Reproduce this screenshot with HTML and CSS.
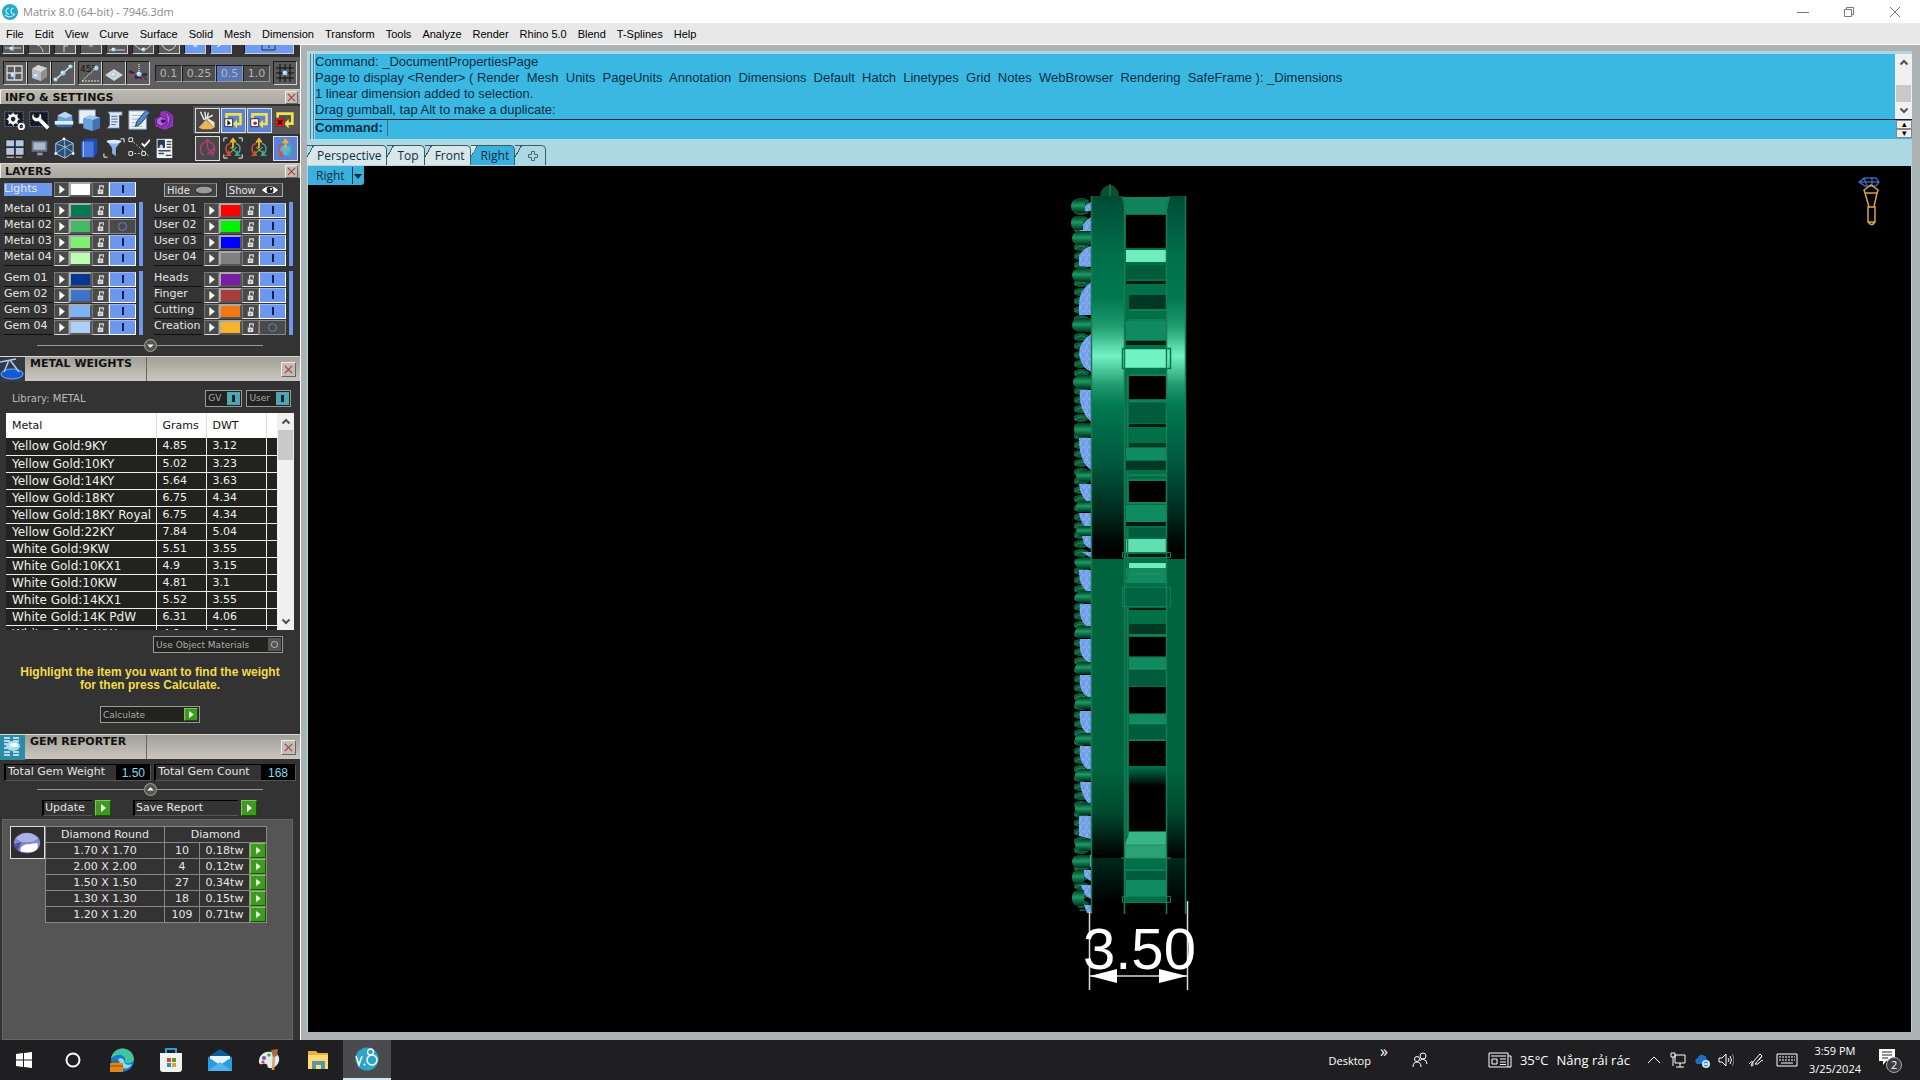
FILE: index.html
```html
<!DOCTYPE html>
<html lang="en">
<head>
  <meta charset="UTF-8" />
  <meta name="viewport" content="width=device-width, initial-scale=1.0" />
  <title>Matrix 8.0 (64-bit) - 7946.3dm</title>
  <link rel="stylesheet" href="styles.css">
</head>
<body>
  <!-- shared icons -->
  <svg class="defs" width="0" height="0">
    <symbol id="i-lock" viewBox="0 0 10 12"><path d="M2 6h6v5H2z" fill="#ddd"/><path d="M4 6V2h4v3" fill="none" stroke="#ddd" stroke-width="1.3"/><path d="M4 8.500h2" stroke="#555"/></symbol>
    <symbol id="i-play" viewBox="0 0 10 10"><path d="M3 1l5 4-5 4z" fill="#f4fff0"/></symbol>
    <symbol id="i-x" viewBox="0 0 10 10"><path d="M1 1l8 8M9 1l-8 8" stroke="#a33a3a" stroke-width="1.2"/></symbol>
    <symbol id="i-up" viewBox="0 0 10 10"><path d="M1.500 7L5 3.500 8.500 7" fill="none" stroke="#505050" stroke-width="2"/></symbol>
    <symbol id="i-down" viewBox="0 0 10 10"><path d="M1.500 3L5 6.500 8.500 3" fill="none" stroke="#505050" stroke-width="2"/></symbol>
    <symbol id="i-dot" viewBox="0 0 6 6"><circle cx="3" cy="3" r="2.500" fill="#9fd4f2"/><circle cx="2.300" cy="2.300" r="1" fill="#fff"/></symbol>
    <symbol id="i-rot" viewBox="0 0 24 24"><path d="M12 3v9M9 6l3-4 3 4" fill="none" stroke="#f0b429" stroke-width="2"/><path d="M9 7C3 8 3 16 8 19M7 15l2 5-5 0" fill="none" stroke="#d8503a" stroke-width="1.600"/><path d="M15 7c6 1 6 9 1 12M17 15l-2 5 5 0" fill="none" stroke="#3fa9a0" stroke-width="1.600"/><path d="M9 11l7 6M16 11l-7 6" stroke="#79b86a" stroke-width="1.200"/></symbol>
    <symbol id="i-loop" viewBox="0 0 24 24"><path d="M4 10V5h16v11h-6" fill="none" stroke="#f3e14c" stroke-width="3"/><path d="M16 11l-5 5 5 5z" fill="#f3e14c"/><path d="M2 10h9v9H2z" fill="#fff" stroke="#222"/></symbol>
  </svg>

  <header class="titlebar">
    <svg class="app-icon" viewBox="0 0 16 16"><circle cx="8" cy="8" r="8" fill="#25a9c4"/><path d="M7 4a3 3 0 1 0 0 6M12 4a3 3 0 1 0 0 6M3 11c3 3 8 2 10-1" fill="none" stroke="#b5edf5" stroke-width="1.200"/></svg>
    <span>Matrix 8.0 (64-bit) - 7946.3dm</span>
    <div class="window-buttons">
      <button aria-label="Minimize"><svg viewBox="0 0 12 12"><path d="M0 6.500h12"/></svg></button>
      <button aria-label="Restore"><svg viewBox="0 0 12 12"><path d="M1.500 3.500h7v7h-7zM3.500 3V1.500h7v7H9"/></svg></button>
      <button aria-label="Close"><svg viewBox="0 0 12 12"><path d="M1 1l10 10M11 1L1 11"/></svg></button>
    </div>
  </header>

  <nav class="menubar">
    <a href="#">File</a><a href="#">Edit</a><a href="#">View</a><a href="#">Curve</a><a href="#">Surface</a><a href="#">Solid</a><a href="#">Mesh</a><a href="#">Dimension</a><a href="#">Transform</a><a href="#">Tools</a><a href="#">Analyze</a><a href="#">Render</a><a href="#">Rhino 5.0</a><a href="#">Blend</a><a href="#">T-Splines</a><a href="#">Help</a>
  </nav>

  <main>
    <aside class="sidebar">
      <div class="tools-cut">
        <button class="tile"><svg viewBox="0 0 20 8"><path d="M2 3h16M10 0v6" stroke="#ccc"/><use href="#i-dot" x="6" y="1" width="5" height="5"/></svg></button>
        <button class="tile"><svg viewBox="0 0 20 8"><path d="M8 0q5 1 6 7" stroke="#ccc" fill="none"/></svg></button>
        <button class="tile"><svg viewBox="0 0 20 8"><path d="M9 0v7M9 1h4" stroke="#ccc"/></svg></button>
        <button class="tile"><svg viewBox="0 0 20 8"><path d="M8 1h4" stroke="#ccc"/></svg></button>
        <button class="tile"><svg viewBox="0 0 20 8"><path d="M2 5h16" stroke="#ccc"/><use href="#i-dot" x="4" y="2" width="5" height="5"/></svg></button>
        <button class="tile"><svg viewBox="0 0 20 8"><path d="M2 0q8 10 16 0" stroke="#ccc" fill="none"/><use href="#i-dot" x="8" y="2" width="5" height="5"/></svg></button>
        <button class="tile"><svg viewBox="0 0 20 8"><path d="M3 0q7 11 14 0" stroke="#ddd" fill="none"/></svg></button>
        <button class="tile blue"><svg viewBox="0 0 20 8"><use href="#i-dot" x="8" y="-2" width="5" height="5"/></svg></button>
        <button class="tile blue"><svg viewBox="0 0 20 8"><path d="M6 2l5-3" stroke="#fff"/></svg></button>
        <button class="tile blue wide"><svg viewBox="0 0 20 8"><path d="M3 0v5h13V0M10 0v3" stroke="#234" fill="none"/></svg></button>
      </div>

      <div class="snap-bar">
        <div class="tiles">
          <button class="tile"><svg viewBox="0 0 22 20"><path d="M3 3h15v14H3zM10.500 3v14M3 10h15" fill="none" stroke="#d5dbe0" stroke-width="1.300"/><use href="#i-dot" x="6" y="9" width="6" height="6"/></svg></button>
          <button class="tile"><svg viewBox="0 0 22 20"><path d="M4 6l6-4 9 3v9l-6 4-9-3z" fill="#8f8f8f"/><path d="M4 6l9 3v9l-9-3z" fill="#b9b9b9"/><path d="M4 6l6-4 9 3-6 4z" fill="#d6d6d6"/><use href="#i-dot" x="5" y="10" width="6" height="6"/></svg></button>
          <button class="tile"><svg viewBox="0 0 22 20"><path d="M3 17L19 3" stroke="#e4e4e4" stroke-width="1.500"/><use href="#i-dot" x="1" y="14" width="5" height="5"/><use href="#i-dot" x="8" y="7" width="6" height="6"/><use href="#i-dot" x="16" y="1" width="5" height="5"/></svg></button>
        </div>
        <div class="tiles">
          <button class="tile"><svg viewBox="0 0 22 20"><path d="M3 18h17M3 18L18 4" stroke="#e4e4e4" stroke-dasharray="2 1"/><use href="#i-dot" x="14" y="2" width="6" height="6"/><text x="1" y="9" font-size="9" fill="#111">45°</text></svg></button>
          <button class="tile"><svg viewBox="0 0 22 20"><path d="M2 12l9-6 9 6-9 6z" fill="#d2d6d2"/><use href="#i-dot" x="8" y="9" width="6" height="6"/></svg></button>
          <button class="tile"><svg viewBox="0 0 22 20"><path d="M12 1v9" stroke="#fff" stroke-dasharray="1 1"/><path d="M2 8l17 9M8 15l12-4" stroke="#27324f" stroke-width="3"/><path d="M3 13l9-3 6 8" stroke="#c2403a" stroke-width="1.500" fill="none"/><use href="#i-dot" x="9" y="8" width="6" height="6"/></svg></button>
        </div>
        <div class="steps">
          <button>0.1</button><button>0.25</button><button class="on">0.5</button><button>1.0</button>
        </div>
        <button class="tile"><svg viewBox="0 0 22 20"><path d="M6 1v18M11 1v18M16 1v18M2 5h18M2 10h18M2 15h18" stroke="#0c0c0c"/><use href="#i-dot" x="8" y="7" width="6" height="6"/></svg></button>
      </div>

      <div class="bar"><h2>INFO &amp; SETTINGS</h2><button class="close" aria-label="Close"><svg><use href="#i-x"/></svg></button></div>
      <div class="icon-rows">
        <div class="icon-row">
          <div class="icons">
            <button><svg viewBox="0 0 24 24"><path d="M2 3h20v16H2z" fill="#141a24" stroke="#7182a5" stroke-dasharray="2 1"/><circle cx="11" cy="11" r="4" fill="none" stroke="#fff" stroke-width="3"/><path d="M11 4v14M4 11h14M6 6l10 10M16 6L6 16" stroke="#fff" stroke-width="1.500"/><circle cx="11" cy="11" r="2.500" fill="#222"/><circle cx="20" cy="19" r="3" fill="none" stroke="#fff" stroke-width="2"/></svg></button>
            <button><svg viewBox="0 0 24 24"><path d="M2 3h20v16H2z" fill="#141a24" stroke="#7182a5" stroke-dasharray="2 1"/><path d="M11 10l11 11" stroke="#fff" stroke-width="4"/><path d="M6 5a5 5 0 1 0 7 0l-1 4-3 1-3-2z" fill="#fff"/></svg></button>
            <button><svg viewBox="0 0 24 24"><path d="M1 15l5-4h14l3 4-3 5H5z" fill="#34689f"/><path d="M2 13h20v4H2z" fill="#dcecf7"/><path d="M5 7l8-4 8 4v6H5z" fill="#6ca5d8"/><path d="M5 7l8-4 8 4-7 3z" fill="#b7daf2"/></svg></button>
            <button><svg viewBox="0 0 24 24"><path d="M1 1h18v15H1z" fill="#e9eef5" stroke="#7b8fae"/><path d="M6 10l7-3 11 2v12l-8 3-10-3z" fill="#3f73b5"/><path d="M6 10l7-3 11 2-8 3z" fill="#9cc7ef"/><path d="M6 10l10 2v12l-10-3z" fill="#6aa0dc"/></svg></button>
            <button><svg viewBox="0 0 24 24"><path d="M5 3h16v4h-3v14H4l3-3V6z" fill="#dce6f3" stroke="#3c5a8a"/><path d="M9 8h7M9 11h7M9 14h7M9 17h5" stroke="#47648f"/></svg></button>
            <button><svg viewBox="0 0 24 24"><path d="M1 2h19v20H1z" fill="#eef3f7" stroke="#8aa1bb"/><path d="M4 7h12M4 11h9M4 15h6M4 19h12" stroke="#9fb0bf"/><path d="M8 19l2-6L20 1l4 3-11 13z" fill="#4e89c9" stroke="#213a5e"/></svg></button>
            <button><svg viewBox="0 0 24 24"><path d="M2 11l6-3V3l7-1 7 5v12l-9 4-10-4z" fill="#8c35b5"/><path d="M8 8l6 2v6l-5 3-5-3v-5zM15 2l4 8-2 9" fill="#b661dd" stroke="#5a1480"/><path d="M8 13l3-2 3 2-3 3z" fill="#3d1260"/></svg></button>
          </div>
          <div class="icons lit">
            <button class="framed"><svg viewBox="0 0 24 24"><path d="M4 2l4 9M9 2l1 8M13 3l-2 8M8 11l10-5" stroke="#eee" stroke-width="1.600"/><path d="M2 20l8-9 10 9-4 2H6z" fill="#e8b55c"/><path d="M12 9l8 5v6l-8-8z" fill="#fbe8b8"/></svg></button>
            <button class="framed blue"><svg viewBox="0 0 24 24"><use href="#i-loop"/><path d="M5 11l4 4-4 3z" fill="#222"/></svg></button>
            <button class="framed blue"><svg viewBox="0 0 24 24"><use href="#i-loop"/><circle cx="7" cy="15" r="2" fill="#d01616"/></svg></button>
            <button><svg viewBox="0 0 24 24"><use href="#i-loop"/><path d="M2 10h9v9H2z" fill="#d22"/><path d="M4 12l5 5M9 12l-5 5" stroke="#500" stroke-width="2"/></svg></button>
          </div>
        </div>
        <div class="icon-row">
          <div class="icons">
            <button><svg viewBox="0 0 24 24"><path d="M3 3h20v17H3z" fill="#b7c6d8" stroke="#101418"/><path d="M13 3v17M3 11h20" stroke="#26303c" stroke-width="2"/><path d="M4 22h8M14 22h7" stroke="#eee"/></svg></button>
            <button><svg viewBox="0 0 24 24"><path d="M5 5h15v10H5z" fill="#aeb8c8" stroke="#65748c" stroke-width="2"/><path d="M10 17h6v3h-6z" fill="#8a94a5"/></svg></button>
            <button><svg viewBox="0 0 24 24"><path d="M3 7l9-5 10 5v10l-9 6-10-5z" fill="#2c4c78" stroke="#b9d5ef"/><path d="M3 7l10 4 9-4M13 11v12M3 18l10-7 9 6M12 2l1 9" stroke="#b9d5ef" fill="none" stroke-width=".8"/><circle cx="12" cy="2" r="1.500" fill="#fff"/><circle cx="3" cy="18" r="1.500" fill="#fff"/><circle cx="22" cy="18" r="1.500" fill="#fff"/></svg></button>
            <button><svg viewBox="0 0 24 24"><path d="M4 5l4-3h13v16l-4 4H4z" fill="#2448ad"/><path d="M4 5h13v17H4z" fill="#4577e0"/><path d="M6 5v17" stroke="#a5c4ff"/></svg></button>
            <button><svg viewBox="0 0 24 24"><path d="M4 4h16l-6 8v9l-4-3v-6z" fill="#8db4ea"/><ellipse cx="12" cy="5" rx="8" ry="2" fill="#dcebff"/><path d="M1 22v-4M1 22h4M23 2v4M23 2h-4" stroke="#fff" fill="none"/></svg></button>
            <button><svg viewBox="0 0 24 24"><path d="M3 3l20 18M3 18h17" stroke="#ddd" stroke-dasharray="2 2"/><path d="M1 1h4v4H1zM1 16h4v4H1zM15 16h4v4h-4z" fill="#222" stroke="#fff"/><path d="M15 7l3 3 6-7" stroke="#fff" stroke-width="2" fill="none"/></svg></button>
            <button><svg viewBox="0 0 24 24"><path d="M4 2h17v21H4z" fill="#eef2f5"/><path d="M5 3h8v9H5z" fill="#23374e"/><path d="M7 12c0-5 4-5 4 0" fill="#c8d3dd"/><path d="M15 5h5M15 8h5M15 11h5M6 15h13M6 18h6M14 20h6" stroke="#445" stroke-width="1.500"/></svg></button>
          </div>
          <div class="icons">
            <button class="framed"><svg viewBox="0 0 24 24"><path d="M9 5C2 8 3 17 8 20M15 5c7 3 6 12 1 15M12 2v9M9 5l3-3 3 3M12 12l7 7M19 12l-7 7" fill="none" stroke="#b53a78" stroke-width="1.800"/></svg></button>
            <button><svg viewBox="0 0 24 24"><use href="#i-rot"/><path d="M2 5V1h4M22 5V1h-4M2 19v4h4M22 19v4h-4" fill="none" stroke="#fff"/></svg></button>
            <button><svg viewBox="0 0 24 24"><use href="#i-rot"/></svg></button>
            <button class="framed blue"><svg viewBox="0 0 24 24"><circle cx="12" cy="14" r="6" fill="#4fb4ff"/><use href="#i-rot"/></svg></button>
          </div>
        </div>
      </div>

      <div class="bar"><h2>LAYERS</h2><button class="close" aria-label="Close"><svg><use href="#i-x"/></svg></button></div>
      <div class="layers">
        <div class="layer lights"><span>Lights</span><button class="arrow"><svg><use href="#i-play"/></svg></button><button class="swatch white"></button><button class="lock"><svg><use href="#i-lock"/></svg></button><button class="vis"></button></div>
        <div class="hide-show">
          <button>Hide <svg viewBox="0 0 20 10"><ellipse cx="10" cy="5" rx="9" ry="4" fill="#9b9b9b" stroke="#222"/></svg></button>
          <button>Show <svg viewBox="0 0 20 10"><path d="M1 5q9-9 18 0-9 9-18 0z" fill="#fff" stroke="#222"/><circle cx="10" cy="5" r="3.500" fill="#222"/><circle cx="11" cy="4" r="1" fill="#fff"/></svg></button>
        </div>
        <div class="group">
          <div class="layer"><span>Metal 01</span><button class="arrow"><svg><use href="#i-play"/></svg></button><button class="swatch metal1"></button><button class="lock"><svg><use href="#i-lock"/></svg></button><button class="vis"></button></div>
          <div class="layer"><span>Metal 02</span><button class="arrow"><svg><use href="#i-play"/></svg></button><button class="swatch metal2"></button><button class="lock"><svg><use href="#i-lock"/></svg></button><button class="vis off"></button></div>
          <div class="layer"><span>Metal 03</span><button class="arrow"><svg><use href="#i-play"/></svg></button><button class="swatch metal3"></button><button class="lock"><svg><use href="#i-lock"/></svg></button><button class="vis"></button></div>
          <div class="layer"><span>Metal 04</span><button class="arrow"><svg><use href="#i-play"/></svg></button><button class="swatch metal4"></button><button class="lock"><svg><use href="#i-lock"/></svg></button><button class="vis"></button></div>
        </div>
        <div class="group">
          <div class="layer"><span>User 01</span><button class="arrow"><svg><use href="#i-play"/></svg></button><button class="swatch user1"></button><button class="lock"><svg><use href="#i-lock"/></svg></button><button class="vis"></button></div>
          <div class="layer"><span>User 02</span><button class="arrow"><svg><use href="#i-play"/></svg></button><button class="swatch user2"></button><button class="lock"><svg><use href="#i-lock"/></svg></button><button class="vis"></button></div>
          <div class="layer"><span>User 03</span><button class="arrow"><svg><use href="#i-play"/></svg></button><button class="swatch user3"></button><button class="lock"><svg><use href="#i-lock"/></svg></button><button class="vis"></button></div>
          <div class="layer"><span>User 04</span><button class="arrow"><svg><use href="#i-play"/></svg></button><button class="swatch user4"></button><button class="lock"><svg><use href="#i-lock"/></svg></button><button class="vis"></button></div>
        </div>
        <div class="group">
          <div class="layer"><span>Gem 01</span><button class="arrow"><svg><use href="#i-play"/></svg></button><button class="swatch gem1"></button><button class="lock"><svg><use href="#i-lock"/></svg></button><button class="vis"></button></div>
          <div class="layer"><span>Gem 02</span><button class="arrow"><svg><use href="#i-play"/></svg></button><button class="swatch gem2"></button><button class="lock"><svg><use href="#i-lock"/></svg></button><button class="vis"></button></div>
          <div class="layer"><span>Gem 03</span><button class="arrow"><svg><use href="#i-play"/></svg></button><button class="swatch gem3"></button><button class="lock"><svg><use href="#i-lock"/></svg></button><button class="vis"></button></div>
          <div class="layer"><span>Gem 04</span><button class="arrow"><svg><use href="#i-play"/></svg></button><button class="swatch gem4"></button><button class="lock"><svg><use href="#i-lock"/></svg></button><button class="vis"></button></div>
        </div>
        <div class="group">
          <div class="layer"><span>Heads</span><button class="arrow"><svg><use href="#i-play"/></svg></button><button class="swatch heads"></button><button class="lock"><svg><use href="#i-lock"/></svg></button><button class="vis"></button></div>
          <div class="layer"><span>Finger</span><button class="arrow"><svg><use href="#i-play"/></svg></button><button class="swatch finger"></button><button class="lock"><svg><use href="#i-lock"/></svg></button><button class="vis"></button></div>
          <div class="layer"><span>Cutting</span><button class="arrow"><svg><use href="#i-play"/></svg></button><button class="swatch cutting"></button><button class="lock"><svg><use href="#i-lock"/></svg></button><button class="vis"></button></div>
          <div class="layer"><span>Creation</span><button class="arrow"><svg><use href="#i-play"/></svg></button><button class="swatch creation"></button><button class="lock"><svg><use href="#i-lock"/></svg></button><button class="vis off"></button></div>
        </div>
      </div>
      <div class="divider"><button aria-label="More"><svg viewBox="0 0 12 12"><circle cx="6" cy="6" r="5.500" fill="#55564e" stroke="#9a9a94"/><path d="M3 5h6L6 8z" fill="#fff"/></svg></button></div>

      <div class="bar tall">
        <svg class="bar-icon" viewBox="0 0 25 25"><path d="M0 0h25v25H0z" fill="#333842"/><ellipse cx="12" cy="17" rx="11" ry="5" fill="#1558d8" stroke="#6fb0ff"/><path d="M0 5l16-3M9 3L4 15M10 3l9 12" stroke="#a7cdf8" stroke-width="1.500"/></svg>
        <h2>METAL WEIGHTS</h2><button class="close" aria-label="Close"><svg><use href="#i-x"/></svg></button>
      </div>
      <div class="library">
        <span>Library: METAL</span>
        <button>GV<i></i></button>
        <button>User<i></i></button>
      </div>
      <div class="weights">
        <div class="weights-clip">
          <table>
            <thead><tr><th>Metal</th><th>Grams</th><th>DWT</th><th></th></tr></thead>
            <tbody>
              <tr><td>Yellow Gold:9KY</td><td>4.85</td><td>3.12</td><td></td></tr>
              <tr><td>Yellow Gold:10KY</td><td>5.02</td><td>3.23</td><td></td></tr>
              <tr><td>Yellow Gold:14KY</td><td>5.64</td><td>3.63</td><td></td></tr>
              <tr><td>Yellow Gold:18KY</td><td>6.75</td><td>4.34</td><td></td></tr>
              <tr><td>Yellow Gold:18KY Royal</td><td>6.75</td><td>4.34</td><td></td></tr>
              <tr><td>Yellow Gold:22KY</td><td>7.84</td><td>5.04</td><td></td></tr>
              <tr><td>White Gold:9KW</td><td>5.51</td><td>3.55</td><td></td></tr>
              <tr><td>White Gold:10KX1</td><td>4.9</td><td>3.15</td><td></td></tr>
              <tr><td>White Gold:10KW</td><td>4.81</td><td>3.1</td><td></td></tr>
              <tr><td>White Gold:14KX1</td><td>5.52</td><td>3.55</td><td></td></tr>
              <tr><td>White Gold:14K PdW</td><td>6.31</td><td>4.06</td><td></td></tr>
              <tr><td>White Gold:14KW</td><td>4.9</td><td>3.15</td><td></td></tr>
            </tbody>
          </table>
        </div>
        <div class="scroll"><svg><use href="#i-up"/></svg><i></i><svg><use href="#i-down"/></svg></div>
      </div>
      <div class="materials"><button>Use Object Materials<i></i></button></div>
      <p class="hint">Highlight the item you want to find the weight<br>for then press Calculate.</p>
      <div class="calculate"><button>Calculate<svg class="go"><use href="#i-play"/></svg></button></div>

      <div class="bar tall">
        <svg class="bar-icon" viewBox="0 0 25 25"><path d="M0 0h25v25H0z" fill="#2c8ba5"/><path d="M4 3h6M13 3h6M4 6h6M13 6h6M4 17h6M13 17h6M4 20h6M13 20h6M4 9h3M4 13h3" stroke="#dff5fb" stroke-width="1.500"/><ellipse cx="13" cy="11" rx="7" ry="5" fill="#a5e0ee"/><ellipse cx="14" cy="10" rx="4" ry="2" fill="#fff"/></svg>
        <h2>GEM REPORTER</h2><button class="close" aria-label="Close"><svg><use href="#i-x"/></svg></button>
      </div>
      <div class="totals">
        <div><span>Total Gem Weight</span><output>1.50</output></div>
        <div><span>Total Gem Count</span><output>168</output></div>
      </div>
      <div class="divider slim"><button aria-label="Less"><svg viewBox="0 0 12 12"><circle cx="6" cy="6" r="5.500" fill="#55564e" stroke="#9a9a94"/><path d="M3 7h6L6 4z" fill="#fff"/></svg></button></div>
      <div class="report-actions">
        <button><span>Update</span><svg class="go"><use href="#i-play"/></svg></button>
        <button class="save"><span>Save Report</span><svg class="go"><use href="#i-play"/></svg></button>
      </div>
      <div class="gems">
        <svg class="gem" viewBox="0 0 35 33"><ellipse cx="17" cy="17" rx="14" ry="11" fill="#8088cc"/><path d="M5 12q12-11 24 0l-6 4H11z" fill="#a9b1e6"/><path d="M3 18l8-2-4 9q-4-3-4-7z" fill="#4c5390"/><path d="M10 26q-1-8 10-8l8-1q3 10-11 10z" fill="#fff"/></svg>
        <table>
          <tr><th>Diamond Round</th><th colspan="3">Diamond</th></tr>
          <tr><td>1.70 X 1.70</td><td>10</td><td>0.18tw</td><td><button class="go"><svg><use href="#i-play"/></svg></button></td></tr>
          <tr><td>2.00 X 2.00</td><td>4</td><td>0.12tw</td><td><button class="go"><svg><use href="#i-play"/></svg></button></td></tr>
          <tr><td>1.50 X 1.50</td><td>27</td><td>0.34tw</td><td><button class="go"><svg><use href="#i-play"/></svg></button></td></tr>
          <tr><td>1.30 X 1.30</td><td>18</td><td>0.15tw</td><td><button class="go"><svg><use href="#i-play"/></svg></button></td></tr>
          <tr><td>1.20 X 1.20</td><td>109</td><td>0.71tw</td><td><button class="go"><svg><use href="#i-play"/></svg></button></td></tr>
        </table>
      </div>
    </aside>

    <section class="workspace">
      <div class="console">
        <div class="grip"></div>
        <div class="console-body">
          <div class="history">
            <pre>Command: _DocumentPropertiesPage
Page to display &lt;Render&gt; ( Render  Mesh  Units  PageUnits  Annotation  Dimensions  Default  Hatch  Linetypes  Grid  Notes  WebBrowser  Rendering  SafeFrame ): _Dimensions
1 linear dimension added to selection.
Drag gumball, tap Alt to make a duplicate:</pre>
            <div class="scroll"><svg><use href="#i-up"/></svg><i></i><svg><use href="#i-down"/></svg></div>
          </div>
          <div class="prompt">
            <label for="command">Command:</label>
            <input type="text" id="command" />
            <div class="spin"><button>▴</button><button>▾</button></div>
          </div>
        </div>
      </div>

      <div class="tabs">
        <button>Perspective</button><button>Top</button><button>Front</button><button class="active">Right</button><button class="add" aria-label="Add view"><svg viewBox="0 0 10 10"><path d="M3.500 0.500h3v3h3v3h-3v3h-3v-3h-3v-3h3z" fill="none" stroke="#4a6670"/></svg></button>
      </div>

      <div class="viewport">
        <button class="view-name"><span>Right</span><svg viewBox="0 0 8 8"><path d="M0 2h8L4 7z" fill="#0b2a3a"/></svg></button>

        <svg class="ring" width="160" height="820" viewBox="1060 180 160 820">
          <defs>
            <linearGradient id="body" x1="0" y1="196" x2="0" y2="559" gradientUnits="userSpaceOnUse">
              <stop offset="0" stop-color="#004a34"/><stop offset=".16" stop-color="#00704a"/><stop offset=".28" stop-color="#007850"/><stop offset=".36" stop-color="#1f9c70"/><stop offset=".44" stop-color="#72f2c4"/><stop offset=".52" stop-color="#239a70"/><stop offset=".58" stop-color="#007850"/><stop offset=".73" stop-color="#005a3e"/><stop offset=".86" stop-color="#002e20"/><stop offset=".95" stop-color="#000804"/><stop offset="1" stop-color="#000"/>
            </linearGradient>
            <linearGradient id="lower" x1="0" y1="559" x2="0" y2="857" gradientUnits="userSpaceOnUse">
              <stop offset="0" stop-color="#00643f"/><stop offset=".7" stop-color="#006440"/><stop offset=".85" stop-color="#004a30"/><stop offset="1" stop-color="#000"/>
            </linearGradient>
            <linearGradient id="foot" x1="0" y1="0" x2="0" y2="1"><stop offset="0" stop-color="#00281b"/><stop offset=".8" stop-color="#000"/></linearGradient>
            <linearGradient id="fade" x1="0" y1="0" x2="0" y2="1"><stop offset="0" stop-color="#00784e"/><stop offset="1" stop-color="#000"/></linearGradient>
            <linearGradient id="bead-fill" x1="0" y1="0" x2="0" y2="1"><stop offset="0" stop-color="#003a20"/><stop offset=".45" stop-color="#1c9a66"/><stop offset="1" stop-color="#00301c"/></linearGradient>
            <pattern id="side" x="1072" y="198" width="20" height="9" patternUnits="userSpaceOnUse"><ellipse cx="9" cy="4" rx="8" ry="4" fill="#0a5a36"/><path d="M3 6q5-5 10-2" stroke="#2a8a5c" fill="none"/></pattern>
            <pattern id="facets" width="6" height="8" patternUnits="userSpaceOnUse"><path d="M0 0h6v8H0z" fill="#7fabf4"/><path d="M0 8L6 0M2 0l3 6" stroke="#5f86cc" stroke-width=".8"/></pattern>
            <symbol id="bead" viewBox="0 0 20 16" preserveAspectRatio="none"><path d="M20 0H8Q0 1 0 8t8 8h12z" fill="url(#bead-fill)"/></symbol>
          </defs>

          <!-- stone side -->
          <path d="M1074 198h17v713h-11l-6-12z" fill="url(#side)"/>
          <g fill="url(#facets)">
            <path d="M1091 202q-7 3-9 9h9zM1091 217q-8 5-12 15h12zM1091 246q-8 2-12 10v10l12 1zM1091 282q-12 8-12 22v11h12zM1091 334q-12 8-12 20 2 14 12 18zM1091 390h-11q-2 20 11 32zM1091 438h-12q0 24 12 32z"/>
            <path d="M1091 484h-12q2 16 12 19zM1091 513h-12q2 14 12 17zM1091 536h-9q1 10 9 13zM1091 552h-9l9 6zM1091 570h-12q0 20 12 23zM1091 604h-11q-2 20 11 24zM1091 639h-11q-2 20 11 24zM1091 675h-11q-2 20 11 23zM1091 711h-11q-2 20 11 24z"/>
            <path d="M1091 746h-11q-2 20 11 25zM1091 782h-11q2 18 11 23zM1091 816h-12v20l12 3zM1091 855h-9l3 12h6zM1091 870h-8q0 8 8 11zM1091 885h-10q3 12 10 14zM1091 905h-7l3 8h4z"/>
          </g>
          <g>
            <use href="#bead" x="1071" y="199" width="14" height="14"/><use href="#bead" x="1071" y="216" width="12" height="14"/>
            <use href="#bead" x="1072" y="231" width="20" height="14"/><use href="#bead" x="1072" y="268" width="20" height="14"/>
            <use href="#bead" x="1072" y="318" width="20" height="14"/><use href="#bead" x="1073" y="375" width="20" height="14"/>
            <use href="#bead" x="1074" y="423" width="20" height="14"/><use href="#bead" x="1076" y="470" width="20" height="12"/>
            <use href="#bead" x="1076" y="501" width="20" height="11"/><use href="#bead" x="1076" y="526" width="20" height="10"/>
            <use href="#bead" x="1075" y="557" width="20" height="12"/><use href="#bead" x="1075" y="591" width="20" height="12"/>
            <use href="#bead" x="1075" y="626" width="20" height="12"/><use href="#bead" x="1075" y="662" width="20" height="12"/>
            <use href="#bead" x="1075" y="697" width="20" height="12"/><use href="#bead" x="1075" y="733" width="20" height="12"/>
            <use href="#bead" x="1075" y="769" width="20" height="12"/><use href="#bead" x="1075" y="803" width="20" height="12"/>
            <use href="#bead" x="1075" y="839" width="20" height="12"/><use href="#bead" x="1072" y="855" width="18" height="13"/>
            <use href="#bead" x="1072" y="870" width="12" height="14"/><use href="#bead" x="1072" y="890" width="12" height="16"/>
          </g>
          <path d="M1100 196q1-10 10-11 8 1 9 11z" fill="#0c4f30"/><path d="M1110 184v12" stroke="#2a8a5c"/>

          <!-- shank -->
          <path d="M1091 196h33v363h-33zM1167 196h18v363h-18z" fill="url(#body)"/>
          <path d="M1091 559h33v298h-33zM1167 559h18v298h-18z" fill="url(#lower)"/>
          <path d="M1091 858h33v56h-33zM1167 858h18v56h-18z" fill="url(#foot)"/>

          <!-- gallery -->
          <path d="M1125 197h42v706h-42z" fill="#007048"/>
          <path d="M1122 197h48l-4 17h-40z" fill="#12835a"/>
          <g fill="#000"><path d="M1126 215h40v33h-40zM1129 376h37v23h-37zM1129 481h37v21h-37zM1129 637h37v20h-37zM1129 687h37v27h-37zM1129 741h37v25h-37zM1129 784h37v47h-37z"/></g>
          <g fill="#001a10"><path d="M1126 281h40v3h-40zM1126 341h40v4h-40zM1129 424h37v3h-37zM1126 522h40v4h-40zM1126 554h40v4h-40zM1129 608h37v2h-37z"/></g>
          <g fill="#003826"><path d="M1129 295h37v14h-37zM1129 443h37v4h-37zM1126 461h40v9h-40zM1129 624h37v10h-37z"/></g>
          <g fill="#005c3d"><path d="M1126 265h40v14h-40zM1129 403h37v20h-37zM1129 528h37v9h-37zM1129 670h37v16h-37zM1129 725h37v15h-37zM1126 871h40v9h-40z"/></g>
          <g fill="#108a60"><path d="M1126 321h40v19h-40zM1126 448h40v12h-40zM1126 505h40v17h-40zM1126 568h40v15h-40zM1129 658h37v11h-37zM1129 715h37v9h-37zM1126 880h40v16h-40z"/></g>
          <path d="M1126 250h40v12h-40zM1129 563h37v5h-37z" fill="#6eeebe"/>
          <path d="M1126 539h40v13h-40z" fill="#62dfb0"/>
          <path d="M1124 349h44v19h-44z" fill="#70f2c2"/>
          <path d="M1129 766h37v20h-37z" fill="url(#fade)"/>
          <path d="M1129 832h37v13h-41z" fill="#38b586"/><path d="M1125 845h42v13h-42z" fill="#2aa177"/>
          <path d="M1122 587h49v20h-49z" fill="#006341"/>
          <path d="M1126 903h40v11h-40z" fill="#000"/>
          <path d="M1129 310h37M1129 320h37M1129 375h37M1129 401h37M1129 480h37M1129 475h37M1129 503h37M1129 574h37M1129 635h37M1129 657h37M1129 669h37M1129 714h37M1129 723h37M1129 740h37M1126 845h40M1126 870h40M1121 858h50" stroke="#2c8a62" fill="none"/>
          <path d="M1122.500 348.500h48v20h-48z" fill="none" stroke="#00734c" stroke-width="1.500"/>
          <path d="M1122.500 587.500h48v19h-48zM1122.500 552.500h48v5h-48zM1122.500 896.500h48v6h-48z" fill="none" stroke="#157a54"/>
          <path d="M1091.500 196v718M1124.500 200v714M1166.500 200v714M1185.500 196v718M1127.500 375v72M1127.500 472v32M1127.500 530v50M1127.500 608v230" stroke="#187a54" fill="none" stroke-width="1.500"/>

          <!-- dimension -->
          <path d="M1089.500 912v78M1187.500 901v89M1089 976h98" stroke="#d8d8d8" stroke-width="1.500" fill="none"/>
          <path d="M1090 976l27-7v14zM1187 976l-28-7v14z" fill="#fff"/>
          <text x="1083" y="969" font-size="58" fill="#fff">3.50</text>
        </svg>

        <svg class="orient" viewBox="0 0 22 52"><path d="M1 6l5-4h12l3 4-3 4H7zM6 2l3 8M14 1v9M1 6h20" fill="none" stroke="#3e5fae" stroke-width="1.500"/><path d="M6 14l7-5 7 5-1 3H7zM7 17l4 14h5l3-14M10 31h7v15q-3 5-7 0zM10 46h7" fill="none" stroke="#d9a34a" stroke-width="1.500"/></svg>
      </div>
    </section>
  </main>

  <footer class="taskbar">
    <div class="apps">
      <button aria-label="Start"><svg viewBox="0 0 24 24"><path d="M4 6l7-1v6.500H4zM12 5l8-1v7.500h-8zM4 12.500h7V19l-7-1zM12 12.500h8V20l-8-1z" fill="#fff"/></svg></button>
      <button aria-label="Search"><svg viewBox="0 0 24 24"><circle cx="12" cy="12" r="6.500" fill="none" stroke="#fff" stroke-width="2"/></svg></button>
      <button aria-label="Edge"><svg viewBox="0 0 24 24"><circle cx="12.500" cy="12" r="11.500" fill="#1a78c9"/><path d="M1 11C2 3 9 0 13 .5 21 1 25 8 23.500 13c-2 3-8 3-9 1 2-4-1-7-5-7C5 7 2 9 1 11z" fill="#3fc6a0"/><path d="M8 12c1-3 6-2 6 1 0 3 4 5 8 3-3 7-13 6-14-4z" fill="#8bdcf0"/><path d="M0 15h13v9H0z" fill="#e0871a"/><path d="M4 15v-2h5v2M0 18h13" stroke="#8c4a08" fill="none"/></svg></button>
      <button aria-label="Store"><svg viewBox="0 0 24 24"><path d="M7 6V1h10v5" fill="none" stroke="#2f9bd8" stroke-width="2"/><path d="M1 5h22v16q0 3-3 3H4q-3 0-3-3z" fill="#f1f1f1"/><path d="M8 10h4v4H8z" fill="#d84a28"/><path d="M13 10h4v4h-4z" fill="#5c9a2c"/><path d="M8 15h4v4H8z" fill="#2a8fb8"/><path d="M13 15h4v4h-4z" fill="#e0a01c"/></svg></button>
      <button aria-label="Mail"><svg viewBox="0 0 24 24"><path d="M0 9l12-8 12 8v13H0z" fill="#0f5c9c"/><path d="M2 8h20v9H2z" fill="#e8f4fc"/><path d="M0 9l12 8 12-8v14H0z" fill="#2e9be0"/><path d="M0 23l12-9 12 9z" fill="#52b6ee"/></svg></button>
      <button aria-label="Paint"><svg viewBox="0 0 24 24"><path d="M2 15C1 8 7 3 14 4c6 0 9 4 8 9-1 4-5 8-10 7-3-1 0-3-3-4-4-1-4 2-7-1z" fill="#e3ebf1"/><circle cx="7" cy="10" r="2" fill="#7a4fb0"/><circle cx="12" cy="7" r="1.800" fill="#3fae54"/><circle cx="6" cy="14" r="1.600" fill="#d8453a"/><path d="M16 22l1-15" stroke="#d8a066" stroke-width="2.500"/><path d="M14 2l7-1-1 7-4 1z" fill="#a86b42"/></svg></button>
      <button aria-label="Explorer"><svg viewBox="0 0 24 24"><path d="M2 3h8l2 2h10v16H2z" fill="#e8b13c"/><path d="M2 7h20v14H2z" fill="#ffd972"/><path d="M6 13h13v8h-4v-4H10v4H6z" fill="#5797ad"/></svg></button>
      <button class="running" aria-label="Matrix"><svg viewBox="0 0 24 24"><circle cx="12" cy="12" r="11.500" fill="#2ca5c9"/><path d="M1 9l3 9 3-9" fill="none" stroke="#fff" stroke-width="1.500"/><circle cx="9.500" cy="17.500" r="1" fill="#fff"/><circle cx="17" cy="13" r="5" fill="none" stroke="#fff" stroke-width="1.500"/><circle cx="15.500" cy="5" r="3" fill="none" stroke="#fff" stroke-width="1.300"/></svg></button>
    </div>
    <div class="tray">
      <span class="desktop">Desktop</span><span class="chevrons">»</span>
      <button class="people" aria-label="People"><svg viewBox="0 0 16 16"><circle cx="5" cy="7" r="2.500"/><path d="M1 15q0-5 4-5t4 5"/><circle cx="11" cy="4" r="3"/><path d="M11 7q4 1 4 5M11 7q-2 0-3 2"/></svg></button>
      <button class="weather"><svg viewBox="0 0 24 16"><path d="M1 1h19v14H1zM20 4h3v11H20"/><path d="M3 4h15M12 7h6M12 10h6M12 12.500h6M4 7h5v5H4z"/></svg><span>35°C</span><span>Nắng rải rác</span></button>
      <div class="status">
        <svg viewBox="0 0 16 16"><path d="M2 11l6-6 6 6"/></svg>
        <svg viewBox="0 0 16 16"><path d="M5 3h10v8H5zM10 11v4M6 15h8M1 1h4v4H1zM3 5v9"/></svg>
        <svg viewBox="0 0 16 16"><path d="M2 11q-2-4 2-5 1-4 5-3 4 1 4 5 2 1 1 4H3z" fill="#1c6fc0" stroke="none"/><circle cx="12" cy="12" r="4" fill="#cfe6f8" stroke="none"/><path d="M10 11q2-2 4 0M14 13q-2 2-4 0" stroke="#1c6fc0"/></svg>
        <svg viewBox="0 0 16 16"><path d="M1 6h3l4-4v12l-4-4H1zM10 6q2 2 0 4M12 4q3 4 0 8"/><path d="M14 2q4 6 0 12" stroke="#888"/></svg>
      </div>
      <svg class="pen" viewBox="0 0 16 16"><path d="M1 12q4-5 4 0c0 4-4 2 0-2L12 2l2 2-7 8q3 1 5-2t3-1M11 8l3-4"/></svg>
      <svg class="keyboard" viewBox="0 0 22 14"><path d="M1 1h20v12H1z"/><path d="M3 4h16M3 7h16" stroke-dasharray="2 1"/><path d="M5 10h12"/></svg>
      <time>3:59 PM<br>3/25/2024</time>
      <button class="notes" aria-label="Notifications"><svg viewBox="0 0 26 26"><path d="M2 2h16v12H9l-3 4v-4H2z" fill="#fff" stroke="none"/><path d="M5 5h10M5 8h10M5 11h6" stroke="#222"/><circle cx="17" cy="18" r="7.500" fill="#3c3c40" stroke="#aaa"/><text x="14" y="22" font-size="11" fill="#fff" stroke="none">2</text></svg></button>
    </div>
  </footer>
</body>
</html>
```

FILE: styles.css
```css
* {
  box-sizing: border-box;
}
body {
  margin: 0;
  height: 100vh;
  display: flex;
  flex-direction: column;
  overflow: hidden;
  font-family: 'DejaVu Sans', sans-serif;
  font-size: 11px;
  color: #e6e6e6;
  background: #333;
}
button {
  padding: 0;
  margin: 0;
  border: none;
  background: none;
  color: inherit;
  font: inherit;
  cursor: pointer;
}
svg {
  display: block;
}
a {
  color: inherit;
  text-decoration: none;
}
.defs {
  position: absolute;
}

/* window */
.titlebar {
  flex: none;
  height: 23px;
  display: flex;
  align-items: center;
  gap: 5px;
  padding-left: 2px;
  background: #fff;
  color: #8a8a8a;
  font-family: 'Open Sans', sans-serif;
  font-size: 11px;
}
.app-icon {
  width: 16px;
  height: 16px;
}
.window-buttons {
  display: flex;
  margin-left: auto;
  padding-right: 2px;
}
.window-buttons button {
  width: 46px;
  height: 20px;
  display: flex;
  align-items: center;
  justify-content: center;
}
.window-buttons svg {
  width: 12px;
  height: 12px;
  fill: none;
  stroke: #777;
}
.menubar {
  flex: none;
  height: 22px;
  display: flex;
  align-items: center;
  gap: 11px;
  padding-left: 6px;
  background: #e8e8e8;
  color: #000;
  font-family: 'Liberation Sans', sans-serif;
}
main {
  flex: 1;
  min-height: 0;
  display: flex;
}

/* sidebar */
.sidebar {
  flex: none;
  width: 300px;
  display: flex;
  flex-direction: column;
  overflow: hidden;
  background: #333;
}
.tools-cut {
  height: 12px;
  display: flex;
  gap: 4px;
  padding: 0 2px 3px;
  overflow: hidden;
}
.tools-cut .tile {
  width: 22px;
  height: 9px;
  border-top: none;
}
.tools-cut .wide {
  width: 50px;
  margin-left: 8px;
}
.tile {
  width: 24px;
  height: 24px;
  border: 1px solid #d0d0d0;
  border-top-color: #1c1c1c;
  border-left-color: #1c1c1c;
  background: #5a5a5a;
}
.tile svg {
  width: 100%;
  height: 100%;
}
.tile.blue {
  background: #6f9bf2;
}
.snap-bar {
  height: 32px;
  display: flex;
  align-items: center;
  padding: 0 3px 0;
  gap: 3px;
  background: #5f5f5f;
}
.tiles {
  display: flex;
}
.steps {
  display: flex;
  flex: 1;
  margin-left: 2px;
}
.steps button {
  flex: 1 0 auto;
  height: 17px;
  border: 1px solid #1c1c1c;
  border-right-color: #999;
  border-bottom-color: #999;
  background: #4d4d4d;
  color: #b5b5b5;
}
.steps .on {
  background: #5875b8;
}
.bar {
  flex: none;
  height: 15px;
  display: flex;
  align-items: center;
  padding: 0 2px 0 4px;
  border-top: 1px solid #d8d6cf;
  border-left: 1px solid #eee;
  background: linear-gradient(#bdbbb4, #a9a7a0);
}
.bar h2 {
  margin: 0;
  font-size: 11px;
  color: #111;
}
.close {
  width: 13px;
  height: 13px;
  margin-left: auto;
  padding: 1px;
  border: 1px solid #eee;
  border-right-color: #666;
  border-bottom-color: #666;
  background: #c2beb6;
}
.close svg {
  width: 9px;
  height: 9px;
}
.bar.tall {
  height: 25px;
  padding: 0 4px 0 0;
  border-left: none;
  background: linear-gradient(#a19f98, #c9c7bf);
}
.tall h2 {
  align-self: stretch;
  width: 122px;
  padding-left: 5px;
  border-right: 1px solid #666;
}
.tall .close {
  width: 15px;
  height: 15px;
  padding: 2px;
}
.bar-icon {
  width: 25px;
  height: 25px;
}

.icon-rows {
  padding: 2px 0 1px 2px;
}
.icon-row {
  height: 28px;
  display: flex;
  justify-content: space-between;
}
.icons {
  display: flex;
  align-items: center;
}
.icons button {
  width: 25px;
  height: 25px;
}
.icons svg {
  width: 24px;
  height: 24px;
  padding: 1px;
}
.icons + .icons {
  width: 107px;
  gap: 1px;
  padding-left: 2px;
}
.lit {
  background: #555;
}
.icons .framed {
  border: 1px solid #ddd;
  background: #484848;
}
.icons .framed svg {
  width: 23px;
  height: 23px;
}
.icons .framed.blue {
  background: #5b82d6;
}

.layers {
  display: grid;
  grid-template-columns: 150px 150px;
  row-gap: 5px;
  padding-top: 3px;
}
.layer {
  height: 16px;
  display: flex;
  align-items: center;
  padding-left: 4px;
}
.layer span {
  width: 48px;
  height: 15px;
  margin-right: 2px;
  line-height: 12px;
  border-bottom: 1px solid #111;
  white-space: nowrap;
}
.layer button {
  height: 15px;
  border: 1px solid #777;
  border-bottom-color: #ddd;
  background: #4a4a4a;
}
.layer .arrow {
  width: 15px;
}
.arrow svg {
  width: 13px;
  height: 11px;
}
.layer .swatch {
  width: 23px;
  border: 2px outset #aaa;
}
.layer .lock {
  width: 17px;
}
.lock svg {
  width: 15px;
  height: 11px;
}
.layer .vis {
  width: 27px;
  border: 1px solid #fff;
  border-top-color: #9bb8f2;
  background: #6c97ec;
}
.vis::before {
  content: '';
  display: block;
  width: 2px;
  height: 8px;
  margin: 0 auto;
  background: #10204a;
}
.layer .vis.off {
  border-color: #888;
  background: #4a4a4a;
}
.vis.off::before {
  width: 7px;
  height: 7px;
  border: 1px solid #6484c4;
  border-radius: 50%;
  background: none;
}
.group {
  width: 143px;
  border-right: 4px solid #6c97ec;
}
.lights span {
  height: 13px;
  background: #6c97ec;
  border: none;
}
.layer .white { background: #fff; }
.layer .metal1 { background: #007a50; }
.layer .metal2 { background: #46b868; }
.layer .metal3 { background: #80f070; }
.layer .metal4 { background: #bcffb4; }
.layer .user1 { background: #f00; }
.layer .user2 { background: #00f400; }
.layer .user3 { background: #00f; }
.layer .user4 { background: #808080; }
.layer .gem1 { background: #003894; }
.layer .gem2 { background: #3c74cc; }
.layer .gem3 { background: #7cb4fc; }
.layer .gem4 { background: #acd0fc; }
.layer .heads { background: #7a1ca4; }
.layer .finger { background: #a83c3c; }
.layer .cutting { background: #f47810; }
.layer .creation { background: #f8b428; }
.hide-show {
  display: flex;
  gap: 9px;
  padding: 2px 0 0 14px;
}
.hide-show button {
  height: 14px;
  display: flex;
  align-items: center;
  gap: 4px;
  padding: 0 2px;
  border: 1px solid #aaa;
  border-top-color: #777;
  background: #444;
  font-size: 10px;
}
.hide-show svg {
  width: 20px;
  height: 10px;
}
.divider {
  height: 21px;
  display: flex;
  justify-content: center;
  align-items: center;
  background: linear-gradient(#999, #999) center / 226px 1px no-repeat;
}
.divider svg {
  width: 13px;
  height: 13px;
}
.slim {
  height: 17px;
}

.library {
  height: 32px;
  display: flex;
  align-items: center;
  gap: 4px;
  padding: 2px 9px 0 12px;
  font-size: 10px;
  color: #bbb;
}
.library span {
  flex: 1;
}
.library button,
.materials button,
.calculate button {
  height: 17px;
  display: flex;
  align-items: center;
  justify-content: space-between;
  padding: 0 1px 0 2px;
  border: 1px solid #999;
  background: #22221f;
  color: #aaa;
  font-size: 9px;
}
.library button {
  gap: 6px;
}
.library i {
  width: 13px;
  height: 13px;
  border: solid #4fa6b0;
  border-width: 3px 5px;
  background: #12262a;
}
.weights {
  height: 217px;
  display: flex;
  padding: 0 6px;
}
.weights-clip {
  width: 271px;
  overflow: hidden;
}
.weights table {
  width: 271px;
  table-layout: fixed;
  border-collapse: collapse;
  color: #f0f0f0;
  background: #22221f;
}
.weights th {
  height: 25px;
  padding: 0 6px;
  border-right: 1px solid #ddd;
  background: #fff;
  color: #111;
  font-weight: normal;
  text-align: left;
}
.weights th:nth-child(1) { width: 150px; }
.weights th:nth-child(2) { width: 50px; }
.weights th:nth-child(3) { width: 60px; }
.weights th:last-child,
.weights td:last-child {
  border-right: none;
}
.weights td {
  height: 17px;
  padding: 0 6px;
  border-right: 1px solid #eee;
  border-bottom: 1px solid #eee;
  line-height: 14px;
  white-space: nowrap;
}
.weights td:first-child {
  font-size: 12px;
}
.scroll {
  width: 17px;
  display: flex;
  flex-direction: column;
  align-items: center;
  background: #f0f0f0;
}
.scroll svg {
  flex: none;
  width: 10px;
  height: 17px;
}
.scroll i {
  width: 15px;
  height: 30px;
  margin-bottom: auto;
  background: #c9c9c9;
}
.materials {
  display: flex;
  justify-content: flex-end;
  padding: 6px 17px 0;
}
.materials button {
  width: 130px;
}
.materials i {
  width: 13px;
  height: 13px;
  background: radial-gradient(circle, #555 2px, #aaa 3px, #555 4px);
}
.hint {
  margin: 13px 0 0;
  text-align: center;
  font: bold 12px/13px 'Liberation Sans', sans-serif;
  color: #f2dc4a;
}
.calculate {
  display: flex;
  justify-content: center;
  padding: 14px 0 11px;
}
.calculate button {
  width: 100px;
}
.go {
  width: 15px;
  height: 15px;
  padding: 2px;
  border: 1px solid #7cc45c;
  border-right-color: #1c5008;
  border-bottom-color: #1c5008;
  background: #3f9a22;
}
.calculate .go {
  width: 14px;
  height: 13px;
  padding: 1px;
}

.totals {
  display: flex;
  gap: 3px;
  padding: 5px 4px 0;
}
.totals div {
  flex: auto;
  height: 17px;
  display: flex;
  border: 1px solid #555;
  border-top-color: #000;
  border-left: 2px solid #000;
}
.totals span {
  flex: 1;
  padding-left: 2px;
  white-space: nowrap;
}
.totals output {
  width: 34px;
  text-align: center;
  background: #000;
  color: #86d8ea;
  font: 12px/16px 'Liberation Sans', sans-serif;
}
.report-actions {
  display: flex;
  gap: 22px;
  padding: 2px 42px 3px;
}
.report-actions button {
  display: flex;
  gap: 3px;
}
.report-actions span {
  width: 50px;
  height: 16px;
  padding-left: 1px;
  border: 1px solid #555;
  border-top-color: #000;
  border-left: 2px solid #000;
  border-right: none;
  text-align: left;
  line-height: 14px;
}
.report-actions .save span {
  width: 105px;
}
.report-actions .go {
  width: 16px;
  height: 16px;
}
.gems {
  flex: 1;
  display: flex;
  align-items: flex-start;
  margin: 0 7px 0 2px;
  padding: 6px 7px;
  border: 1px solid #666;
  background: #555;
}
.gem {
  width: 35px;
  height: 33px;
  border: 1px solid #ddd;
  background: #2e2e2e;
}
.gems table {
  width: 222px;
  border-collapse: collapse;
  background: #333;
}
.gems th,
.gems td {
  height: 16px;
  padding: 0;
  border: 1px solid #888;
  font-weight: normal;
  line-height: 14px;
  text-align: center;
}
.gems td:first-child { width: 119px; }
.gems td:nth-child(2) { width: 35px; }
.gems td:last-child { width: 17px; }
.gems .go {
  display: block;
  width: 16px;
  height: 15px;
}
.gems .go svg {
  width: 10px;
  height: 9px;
}

/* workspace */
.workspace {
  flex: 1;
  min-width: 0;
  display: flex;
  flex-direction: column;
  margin-left: 1px;
  border: solid #adb3b4;
  border-width: 6px 8px 8px 6px;
  outline: 1px solid #fff;
  background: #acd8e4;
  color: #0b2f45;
  font-family: 'Liberation Sans', sans-serif;
}
.console {
  display: flex;
  padding-top: 3px;
}
.grip {
  width: 4px;
  margin: 0 1px 0 3px;
  border: solid #3f7f9a;
  border-width: 0 1px;
}
.console-body {
  flex: 1;
  min-width: 0;
  background: #3bb8e2;
}
.history {
  height: 66px;
  display: flex;
  justify-content: space-between;
  border-bottom: 1px solid #123;
}
.history pre {
  margin: 0;
  overflow: hidden;
  font: 13px/16px 'Liberation Sans', sans-serif;
}
.history .scroll i {
  height: 17px;
  margin: auto 0 0;
}
.prompt {
  height: 19px;
  display: flex;
  align-items: flex-start;
}
.prompt label {
  font-size: 13px;
  font-weight: bold;
}
.prompt input {
  flex: 1;
  height: 16px;
  margin-left: 4px;
  padding: 0;
  border: none;
  border-left: 1px solid #33718c;
  outline: none;
  background: none;
}
.spin {
  width: 16px;
}
.spin button {
  display: block;
  width: 16px;
  height: 9px;
  border: 1px solid #888;
  background: #eee;
  color: #000;
  font-size: 9px;
  line-height: 7px;
}
.tabs {
  height: 27px;
  display: flex;
  align-items: flex-end;
  padding-bottom: 1px;
  font-family: 'Open Sans', sans-serif;
}
.tabs button {
  height: 20px;
  padding: 0 5px 0 10px;
  border: 1px solid #3c5c68;
  border-left: none;
  border-bottom: none;
  border-radius: 0 5px 0 0;
  background: linear-gradient(120deg, #acd8e4 5px, #3c5c68 5px, #3c5c68 6px, #d8e8ea 6px);
  font-size: 12px;
  line-height: 16px;
}
.tabs .active {
  background: linear-gradient(120deg, #d8e8ea 5px, #3c5c68 5px, #3bb0dc 6px);
}
.tabs .add {
  width: 31px;
  background: linear-gradient(120deg, #acd8e4 5px, #3c5c68 5px, #3c5c68 6px, #acd8e4 6px);
}
.add svg {
  width: 10px;
  height: 10px;
  margin: 0 auto;
}
.viewport {
  flex: 1;
  position: relative;
  margin-left: 1px;
  margin-right: 1px;
  background: #000;
}
.view-name {
  display: flex;
  align-items: center;
  height: 19px;
  padding: 0 2px 0 8px;
  background: #3bb0dc;
  color: #0b2f45;
  font: 12px 'Open Sans', sans-serif;
  border-radius: 0 0 3px 0;
}
.view-name span {
  padding-right: 7px;
  border-right: 1px solid #0b2f45;
}
.view-name svg {
  width: 8px;
  height: 8px;
  margin-left: 1px;
}
.ring {
  position: absolute;
  left: 752px;
  top: 14px;
}
.orient {
  position: absolute;
  right: 31px;
  top: 10px;
  width: 22px;
  height: 52px;
}

/* taskbar */
.taskbar {
  flex: none;
  height: 40px;
  display: flex;
  justify-content: space-between;
  background: #1f1f22;
  color: #fff;
  font-family: 'Open Sans', sans-serif;
  font-size: 12px;
}
.apps {
  display: flex;
  gap: 1px;
}
.apps button {
  width: 48px;
  display: flex;
  align-items: center;
  justify-content: center;
}
.apps svg {
  width: 24px;
  height: 24px;
}
.apps .running {
  border-bottom: 2px solid #cfe8f5;
  background: #4b4b4f;
}
.tray {
  display: flex;
  align-items: center;
  padding-right: 17px;
}
.tray svg {
  fill: none;
  stroke: #fff;
}
.desktop {
  font-size: 11px;
}
.chevrons {
  align-self: flex-start;
  margin: 0 24px 0 9px;
  font-size: 16px;
}
.people svg {
  width: 16px;
  height: 16px;
}
.weather {
  display: flex;
  align-items: center;
  gap: 8px;
  margin: 0 16px 0 60px;
  font-size: 13px;
}
.weather svg {
  width: 24px;
  height: 16px;
}
.status {
  display: flex;
  gap: 8px;
}
.status svg,
.pen {
  width: 16px;
  height: 16px;
}
.pen {
  margin: 0 12px 0 14px;
}
.keyboard {
  width: 22px;
  height: 14px;
}
time {
  margin: 0 16px 0 11px;
  font-size: 11px;
  line-height: 18px;
  text-align: center;
}
.notes svg {
  width: 26px;
  height: 26px;
}
```
